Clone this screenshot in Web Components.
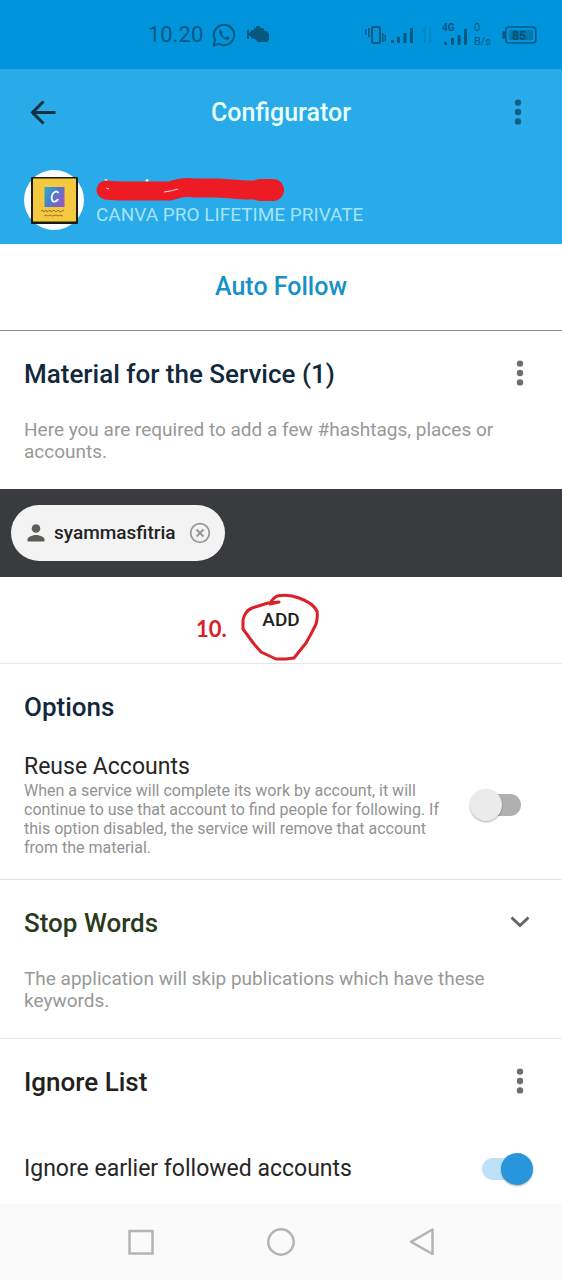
<!DOCTYPE html>
<html lang="en">
<head>
<meta charset="utf-8">
<meta name="viewport" content="width=device-width, initial-scale=1">
<title>Configurator</title>
<style>
  body { margin: 0; background: #fff; color: #212121; font-family: Roboto, "Noto Sans", sans-serif; }
</style>
</head>
<body>
<app-screen></app-screen>
<script>
const define = (name, html, setup) => {
  const template = document.createElement('template');
  template.innerHTML = html;
  customElements.define(name, class extends HTMLElement {
    constructor() {
      super();
      this.attachShadow({ mode: 'open' }).append(template.content.cloneNode(true));
    }
    connectedCallback() { if (setup) setup(this, this.shadowRoot); }
  });
};

define('more-button', `
  <style>
    :host { display: block; color: #6e6e6e; }
    button { display: block; border: 0; padding: 0; background: none; color: inherit; width: 24px; height: 32px; }
    svg { display: block; }
  </style>
  <button type="button" aria-label="More options">
    <svg width="24" height="32" viewBox="0 0 24 32" fill="currentColor"><circle cx="12" cy="5.600" r="3.200"/><circle cx="12" cy="15" r="3.200"/><circle cx="12" cy="24.400" r="3.200"/></svg>
  </button>`);

define('status-bar', `
  <style>
    :host { display: flex; align-items: center; justify-content: space-between; height: 69px; padding: 0 25px 0 148px; box-sizing: border-box; background: #0094dc; color: #06587f; }
    .left, .right { display: flex; align-items: center; }
    .left { gap: 9px; font-size: 22px; line-height: 28px; }
    svg { display: block; flex: none; }
    .net { display: grid; font-size: 11px; line-height: 14px; margin: 0 11px 0 5px; }
    .right svg text { font-family: Roboto, sans-serif; font-weight: 700; }
  </style>
  <div class="left"><span>10.20</span>
    <svg width="24" height="24" viewBox="0 0 24 24" fill="none" stroke="currentColor" stroke-width="2"><path d="M1.600 22.400l1.500-5.500A10.200 10.200 0 1 1 7.100 20.900z"/><path d="M8.400 6.500c-1.400.6-1.700 2.200-1 3.800 1.200 2.900 3.200 5 6.100 6.200 1.700.7 3.500.4 4-1.200l.1-1-2.600-1.300-1.400 1.500c-2-.8-3.300-2.200-4-3.900l1.100-1.400z" fill="currentColor" stroke="none"/></svg>
    <svg width="26" height="20" viewBox="0 0 24 20" fill="currentColor"><path d="M1 5h2v3l3-3h2V3h2V1h4v2h3l2 3h2l2 3v6l-2 2h-9l-3-3H7l-3-3H3v3H1z"/></svg>
  </div>
  <div class="right">
    <svg width="52" height="24" viewBox="0 0 52 24" fill="currentColor"><rect x="8" y="4" width="8" height="16" rx="1.500" fill="none" stroke="currentColor" stroke-width="2"/><path d="M1 6h1.500v6H1zM4 5h1.500v9H4zM18 10h1.500v9H18zM20.500 12H22v6h-1.500zM27 17h3v3h-3zM33 14h3v6h-3zM39.500 10h3v10h-3zM46 5h3v15h-3z"/></svg>
    <svg width="26" height="24" viewBox="0 0 26 24" fill="none" stroke="currentColor" stroke-width="1.500" opacity=".3"><path d="M9 20V5L6.500 8M14 4v15l2.500-3"/></svg>
    <svg width="27" height="28" viewBox="0 0 27 28" fill="currentColor"><text x="0" y="10" font-size="10">4G</text><path d="M2 21h3v3H2zM9 17h3v7H9zM15.500 14h3v10h-3zM22 8h3v16h-3z"/></svg>
    <div class="net"><span>0</span><span>B/s</span></div>
    <svg width="35" height="20" viewBox="0 0 35 20"><rect x="3.800" y="2" width="30" height="16" rx="3" fill="none" stroke="currentColor" stroke-width="1.600"/><rect x="0.500" y="6" width="2.500" height="8" rx="1" fill="currentColor"/><rect x="7" y="5" width="24" height="10" fill="currentColor" opacity=".45"/><text x="10" y="14.500" font-size="12" fill="#044c72">85</text></svg>
  </div>`);

define('app-header', `
  <style>
    :host { display: block; height: 175px; background: #28abe8; box-sizing: border-box; }
    .bar { display: grid; grid-template-columns: 40px 1fr 40px; align-items: center; height: 88px; padding: 0 24px; }
    button { display: block; border: 0; padding: 0; background: none; color: #12303f; }
    svg { display: block; }
    h1 { margin: 0; font-size: 25px; line-height: 28px; font-weight: 500; color: #e9ffff; text-align: center; }
    more-button { color: #0d5f86; justify-self: end; }
    .more { display: grid; padding-right: 8px; }
    .account { display: flex; gap: 12px; padding: 13px 24px 0; }
    .info { display: grid; align-content: start; padding-top: 7px; }
    .name { height: 26px; margin-left: -2px; }
    .plan { font-size: 19px; line-height: 24px; color: #a5e3fb; }
  </style>
  <div class="bar">
    <button type="button" aria-label="Back"><svg width="40" height="28" viewBox="0 0 40 28" fill="none" stroke="currentColor" stroke-width="3"><path d="M31.500 13.500H8.500M19.500 2.500l-11 11 11 11"/></svg></button>
    <h1>Configurator</h1>
    <div class="more"><more-button></more-button></div>
  </div>
  <div class="account">
    <svg width="60" height="60" viewBox="0 0 60 60" role="img" aria-label="Profile picture">
      <circle cx="30" cy="30" r="30" fill="#fdfefe"/>
      <rect x="7" y="7" width="47" height="47" rx="1" fill="#1b1a10"/>
      <rect x="9" y="8.500" width="43" height="43" fill="#f4c93f"/>
      <defs><linearGradient id="g" x1="0" y1="0" x2="1" y2="0.600"><stop offset="0" stop-color="#2eaec6"/><stop offset=".5" stop-color="#477fce"/><stop offset="1" stop-color="#8f5bc4"/></linearGradient></defs>
      <rect x="20.500" y="17" width="20" height="20" fill="url(#g)"/>
      <path d="M34 22.500c-1-2-4-1.200-5.500 1.800-1.500 3.200-1 7 1.300 7.300 1.700.2 3-.7 4-2" fill="none" stroke="#fff" stroke-width="1.800" stroke-linecap="round"/>
      <path d="M17 41l2-1 1 2 2-2 1 2 3-2 1 2 3-2 2 2 2-2 2 2 4-2M20 46l2-1 2 1 2-1 2 1 4-1 2 1 2-1 3 1" fill="none" stroke="#9b742d" stroke-width="1"/>
    </svg>
    <div class="info">
      <svg class="name" width="192" height="26" viewBox="0 0 192 26">
        <circle cx="12" cy="3.500" r="1.500" fill="#e9ffff"/><circle cx="53" cy="3.500" r="1.500" fill="#e9ffff"/>
        <path d="M12 13Q20 14 32 14L76 14Q90 9 100 11L124 11 152 13H180" fill="none" stroke="#ed1c24" stroke-width="19" stroke-linecap="round" stroke-linejoin="round"/>
        <path d="M166 13h13" stroke="#ed1c24" stroke-width="22" stroke-linecap="round"/>
        <path d="M70 15q8-1 14-3M12 11l3 1" fill="none" stroke="#ffd5df" stroke-width="1"/>
      </svg>
      <span class="plan">CANVA PRO LIFETIME PRIVATE</span>
    </div>
  </div>`);

define('service-tab', `
  <style>
    :host { display: grid; place-items: center; height: 87px; box-sizing: border-box; border-bottom: 1px solid #8e8e8e; }
    a { font-size: 25px; line-height: 28px; font-weight: 500; color: #1791c8; text-decoration: none; }
  </style>
  <a href="#"><slot></slot></a>`);

define('settings-section', `
  <style>
    :host { display: block; padding: 27px 24px 26px; border-bottom: 1px solid #e4e4e4; }
    :host([flush]) { border-bottom: 0; padding-bottom: 0; }
    :host([options]) { padding-bottom: 22px; }
    header { display: flex; justify-content: space-between; align-items: center; height: 32px; padding-right: 6px; }
    h2 { margin: 0; font-size: 26px; line-height: 32px; font-weight: 500; color: var(--title, #12283d); }
    .note { display: block; font-size: 19px; line-height: 22px; color: #989898; margin-top: 29px; max-width: 480px; }
    :host([options]) .note, :host([flush]) .note { display: contents; }
  </style>
  <header><h2></h2><slot name="action"></slot></header>
  <div class="note"><slot></slot></div>`,
  (host, root) => { root.querySelector('h2').textContent = host.getAttribute('heading'); });

define('expand-button', `
  <style>
    :host { display: block; }
    button { display: block; border: 0; padding: 0; background: none; color: #666; }
    svg { display: block; }
  </style>
  <button type="button" aria-label="Expand">
    <svg width="24" height="24" viewBox="0 0 24 24" fill="none" stroke="currentColor" stroke-width="3"><path d="M3.500 6.500l8.500 8 8.500-8"/></svg>
  </button>`);

define('account-chips', `
  <style>
    :host { display: flex; align-items: center; height: 88px; padding: 0 11px; background: #3a3b3f; box-sizing: border-box; }
    .chip { display: flex; align-items: center; height: 56px; padding: 0 13px; border-radius: 28px; background: #f3f3f3; box-sizing: border-box; }
    .chip > span { font-size: 19px; line-height: 24px; font-weight: 500; color: #232323; margin: 0 12px 0 8px; }
    button { display: block; border: 0; padding: 0; background: none; }
    svg { display: block; }
  </style>
  <div class="chip">
    <svg width="22" height="22" viewBox="0 0 22 22" fill="#5d5d58"><circle cx="12" cy="6.500" r="4.300"/><path d="M3.500 19.500v-2c0-3 5.500-4.500 8.500-4.500s8.500 1.500 8.500 4.500v2z"/></svg>
    <span><slot></slot></span>
    <button type="button" aria-label="Remove"><svg width="24" height="24" viewBox="0 0 24 24" fill="none" stroke="#9a9a9a" stroke-width="1.800"><circle cx="12" cy="12" r="9.300"/><path stroke-width="2.200" d="M8.500 8.500l7 7M15.500 8.500l-7 7"/></svg></button>
  </div>`);

define('add-row', `
  <style>
    :host { display: grid; place-items: center; position: relative; height: 87px; box-sizing: border-box; border-bottom: 1px solid #e6e6e6; }
    button { border: 0; padding: 0; background: none; font: 500 19px/24px Roboto, sans-serif; color: #212121; }
    .mark { position: absolute; left: 50%; top: 50%; transform: translate(-85px, -27px); display: flex; color: #dc2027; pointer-events: none; }
    .mark span { width: 44px; margin-top: 24px; font: 700 22px/24px Lato, sans-serif; }
    svg { display: block; }
  </style>
  <button type="button">ADD</button>
  <div class="mark"><span>10.</span>
    <svg width="80" height="68" viewBox="0 0 80 68" fill="none" stroke="currentColor" stroke-width="3" stroke-linecap="round" stroke-linejoin="round"><path d="M39 9L30 11Q31 7 37 3Q49 1 59 5Q73 10 77 18Q78 24 76 31L71 41 66 50 54 65 46 66H36L21 59 14 51 3 36V27Q5 18 12 15L28 10 39 9"/></svg>
  </div>`);

define('toggle-row', `
  <style>
    :host { display: flex; align-items: center; justify-content: space-between; }
    .text { display: grid; flex: 1; max-width: 436px; }
    label { font-size: 23px; line-height: 28px; color: #262626; }
    slot { display: block; font-size: 16px; line-height: 19px; color: #929292; }
    input { appearance: none; flex: none; position: relative; width: 52px; height: 34px; margin: 0; }
    input::before { content: ""; position: absolute; left: 1px; right: 1px; top: 6px; height: 22px; border-radius: 11px; background: #b0b0b0; }
    input::after { content: ""; position: absolute; left: 0; top: 1px; width: 32px; height: 32px; border-radius: 50%; background: #ebebeb; box-shadow: 0 1px 2px #0005; }
    input:checked::before { background: #bde1f7; }
    input:checked::after { left: auto; right: 0; background: #2896dc; }
  </style>
  <div class="text"><label for="toggle"></label><slot></slot></div>
  <input id="toggle" type="checkbox" role="switch">`,
  (host, root) => {
    root.querySelector('label').textContent = host.getAttribute('label');
    root.querySelector('input').checked = host.hasAttribute('on');
  });

define('system-nav', `
  <style>
    :host { display: block; background: #fafafa; }
    nav { display: grid; grid-template-columns: repeat(3, 1fr); place-items: center; height: 76px; padding: 0 12.5%; }
    button { display: grid; place-items: center; border: 0; padding: 0; width: 28px; height: 30px; background: none; }
    svg { display: block; }
  </style>
  <nav aria-label="System">
    <button type="button" aria-label="Recent apps"><svg width="28" height="30" viewBox="0 0 28 30" fill="none" stroke="#b4b4b4" stroke-width="2.500"><rect x="2.500" y="4" width="23" height="22.500"/></svg></button>
    <button type="button" aria-label="Home"><svg width="28" height="30" viewBox="0 0 28 30" fill="none" stroke="#b4b4b4" stroke-width="2.500"><circle cx="14" cy="15" r="12.700"/></svg></button>
    <button type="button" aria-label="Back"><svg width="28" height="30" viewBox="0 0 28 30" fill="none" stroke="#b4b4b4" stroke-width="2.500" stroke-linejoin="round"><path d="M24.500 2.500v24.500L3 14.800z"/></svg></button>
  </nav>`);

define('app-screen', `
  <style>
    :host { display: flex; flex-direction: column; min-height: 100vh; }
    main { display: block; flex: 1; }
    .material { border-bottom: 0; }
    .stop { --title: #2a3a1d; }
    .ignore { --title: #212121; }
    .reuse { margin: 30px 16px 0 0; }
    .followed { margin: 54px 5px 16px 0; }
  </style>
  <status-bar></status-bar>
  <app-header></app-header>
  <main>
    <service-tab>Auto Follow</service-tab>
    <settings-section class="material" heading="Material for the Service (1)">
      <more-button slot="action"></more-button>
      Here you are required to add a few #hashtags, places or accounts.
    </settings-section>
    <account-chips>syammasfitria</account-chips>
    <add-row></add-row>
    <settings-section options heading="Options">
      <toggle-row class="reuse" label="Reuse Accounts">When a service will complete its work by account, it will continue to use that account to find people for following. If this option disabled, the service will remove that account from the material.</toggle-row>
    </settings-section>
    <settings-section class="stop" heading="Stop Words">
      <expand-button slot="action"></expand-button>
      The application will skip publications which have these keywords.
    </settings-section>
    <settings-section class="ignore" flush heading="Ignore List">
      <more-button slot="action"></more-button>
      <toggle-row class="followed" label="Ignore earlier followed accounts" on></toggle-row>
    </settings-section>
  </main>
  <system-nav></system-nav>`);
</script>
</body>
</html>
